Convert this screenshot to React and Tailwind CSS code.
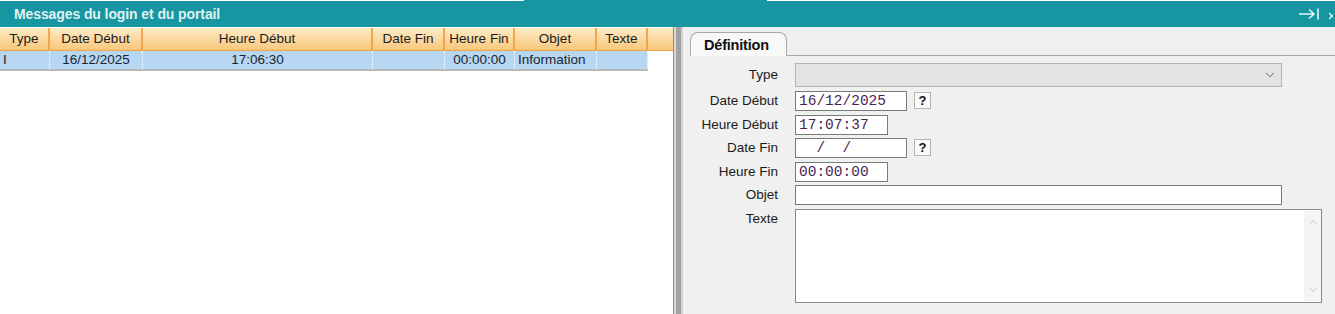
import { ChevronDown, ChevronUp } from "lucide-react";

const cols = [
  { name: "Type", w: "w-[50px]", align: "text-left pl-[3px]", val: "I" },
  { name: "Date Début", w: "w-[93px]", align: "text-center", val: "16/12/2025" },
  { name: "Heure Début", w: "w-[230px]", align: "text-center", val: "17:06:30" },
  { name: "Date Fin", w: "w-[72px]", align: "text-center", val: "" },
  { name: "Heure Fin", w: "w-[70px]", align: "text-center", val: "00:00:00" },
  { name: "Objet", w: "w-[82px]", align: "text-left pl-[3px]", val: "Information" },
  { name: "Texte", w: "w-[51px]", align: "text-center", val: "" },
];

function Label({ children }) {
  return (
    <div className="w-[96px] pr-[1px] text-right text-[13.5px] leading-[20px] text-[#1a1a1a] whitespace-nowrap">
      {children}
    </div>
  );
}

function Field({ value, w }) {
  return (
    <div
      className={`${w} h-[20px] border border-[#7a7a7a] bg-white pl-[3px] font-['Liberation_Mono',monospace] text-[14.5px] leading-[18px] text-[#4a1f55] whitespace-pre`}
    >
      {value}
    </div>
  );
}

function Help() {
  return (
    <div className="mt-[1px] flex h-[17px] w-[17px] items-center justify-center border border-[#b5b5b5] bg-[#fafafa] text-[13px] font-bold leading-none text-[#111]">
      ?
    </div>
  );
}

export default function App() {
  return (
    <div className="h-[314px] w-[1335px] overflow-hidden bg-white font-['Liberation_Sans',Arial,sans-serif]">
      <div className="flex h-[1px]">
        <div className="w-[524px] bg-white" />
        <div className="w-[243px] bg-[#1795a0]" />
        <div className="flex-1 bg-white" />
      </div>
      <div className="flex h-[26px] items-center justify-between bg-[#1795a0] pl-[14px] pr-[2px]">
        <span className="text-[14px] font-semibold tracking-[-0.1px] text-[#dff2f3]">
          Messages du login et du portail
        </span>
        <div className="flex items-center gap-[9px] text-[#e6f5f6]">
          <svg width="22" height="14" viewBox="0 0 22 14" fill="none" stroke="currentColor" strokeWidth="1.6">
            <path d="M1 7h15M11 2.5 16 7l-5 4.5M20 1.5v11" />
          </svg>
          <svg width="4" height="12" viewBox="0 0 4 12" fill="none" stroke="currentColor" strokeWidth="1.4">
            <path d="M0 5 4 9M0 11l4-4" />
          </svg>
        </div>
      </div>
      <div className="flex h-[287px]">
        <div className="w-[673px] bg-white pt-[1px]">
          <div className="flex h-[23px] bg-gradient-to-b from-[#fdebc6] to-[#f9c77a] border-b border-[#f2a24a]">
            {cols.map((c) => (
              <div
                key={c.name}
                className={`${c.w} border-r-2 border-[#f3a54c] text-center text-[13.5px] leading-[22px] text-[#1c1c1c] whitespace-nowrap`}
              >
                {c.name}
              </div>
            ))}
          </div>
          <div className="flex h-[20px] w-[648px] bg-[#b6d6f1] border-b-2 border-[#b8b8b8]">
            {cols.map((c) => (
              <div
                key={c.name}
                className={`${c.w} ${c.align} border-r border-dotted border-white text-[13.5px] leading-[18px] text-[#1c2430] whitespace-nowrap`}
              >
                {c.val}
              </div>
            ))}
          </div>
        </div>
        <div className="flex w-[10px]">
          <div className="w-[1px] bg-[#8a8a8a]" />
          <div className="w-[2px] bg-[#d8d8d8]" />
          <div className="w-[5px] bg-[#a2a2a2]" />
          <div className="w-[2px] bg-[#d4d4d4]" />
        </div>
        <div className="flex-1 bg-[#f0f0f0]">
          <div className="flex h-[29px] items-end pl-[7px]">
            <div className="h-[24px] w-[97px] rounded-t-[8px] border border-b-0 border-[#a8a8a8] bg-[#f8f8f8] pt-[2px] pl-[13px] text-[14.5px] font-bold tracking-[-0.2px] text-[#111]">
              Définition
            </div>
            <div className="h-[1px] flex-1 bg-[#a8a8a8]" />
          </div>
          <div className="flex flex-col pt-[7px]">
            <div className="flex h-[24px] items-center gap-[16px]">
              <Label>Type</Label>
              <div className="flex h-[24px] w-[487px] items-center justify-end border border-[#b5b5b5] bg-[#e3e3e3] pr-[4px]">
                <ChevronDown size={14} strokeWidth={1.5} className="text-[#555]" />
              </div>
            </div>
            <div className="mt-[4px] flex flex-col gap-[3.5px]">
              <div className="flex items-start gap-[16px]">
                <Label>Date Début</Label>
                <div className="flex items-start gap-[7px]">
                  <Field value="16/12/2025" w="w-[112px]" />
                  <Help />
                </div>
              </div>
              <div className="flex items-start gap-[16px]">
                <Label>Heure Début</Label>
                <Field value="17:07:37" w="w-[93px]" />
              </div>
              <div className="flex items-start gap-[16px]">
                <Label>Date Fin</Label>
                <div className="flex items-start gap-[7px]">
                  <Field value="  /  /" w="w-[112px]" />
                  <Help />
                </div>
              </div>
              <div className="flex items-start gap-[16px]">
                <Label>Heure Fin</Label>
                <Field value="00:00:00" w="w-[93px]" />
              </div>
              <div className="flex items-start gap-[16px]">
                <Label>Objet</Label>
                <div className="h-[20px] w-[487px] border border-[#7a7a7a] bg-white" />
              </div>
              <div className="flex items-start gap-[16px]">
                <Label>Texte</Label>
                <div className="flex h-[94px] w-[527px] justify-end border border-[#8a8a8a] bg-white">
                  <div className="my-[1px] flex w-[17px] flex-col items-center justify-between bg-[#f4f4f4] py-[5px]">
                    <ChevronUp size={12} strokeWidth={1.5} className="text-[#b0b0b0]" />
                    <ChevronDown size={12} strokeWidth={1.5} className="text-[#b0b0b0]" />
                  </div>
                </div>
              </div>
            </div>
          </div>
        </div>
      </div>
    </div>
  );
}
